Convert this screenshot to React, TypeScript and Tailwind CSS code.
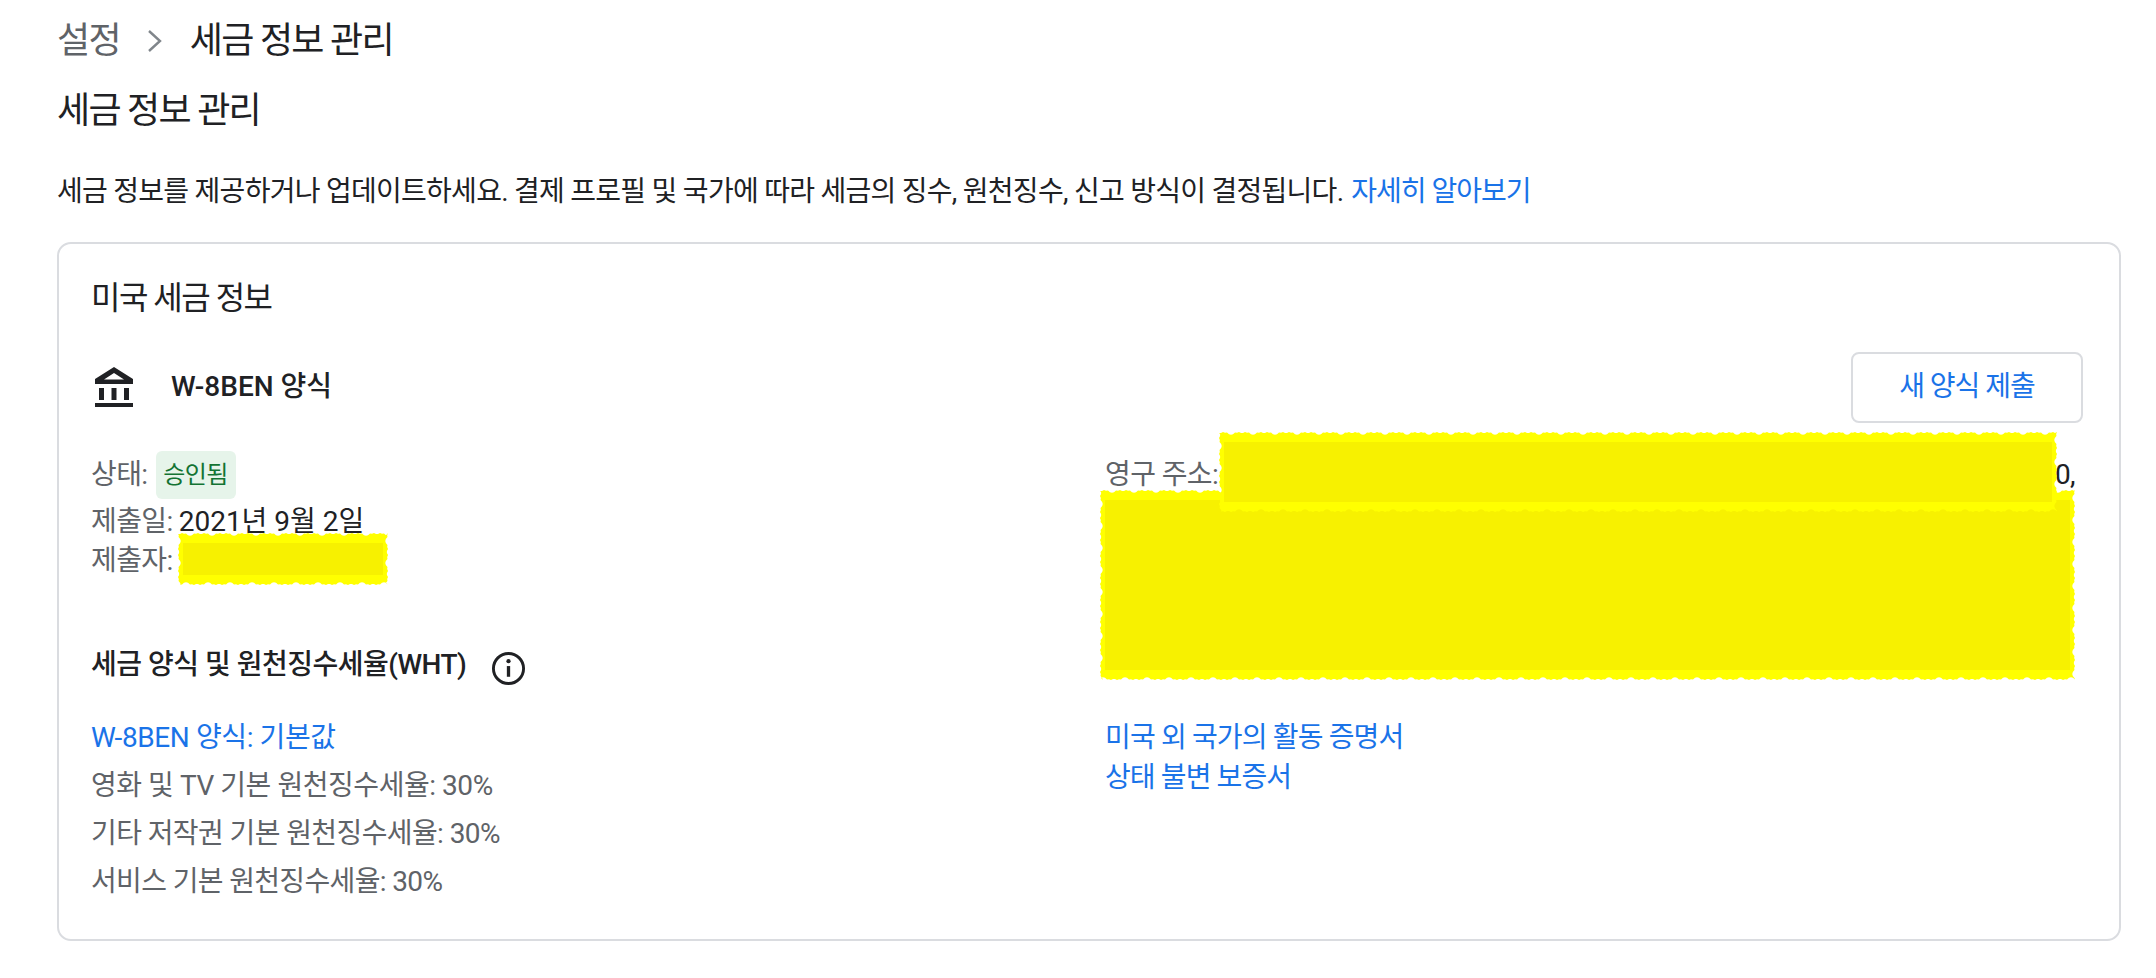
import React from 'react';

const font = { fontFamily: 'Roboto, "Noto Sans CJK KR", "Liberation Sans", sans-serif' };

function BankIcon() {
  return (
    <svg width="38" height="40" viewBox="0 0 38 40" fill="#202124">
      <path d="M19 0 L38 12 V17 H0 V12 Z M19 6 L9 12.5 H29 Z" fillRule="evenodd" />
      <rect x="4" y="21" width="5" height="12" />
      <rect x="16.5" y="21" width="5" height="12" />
      <rect x="29" y="21" width="5" height="12" />
      <rect x="0" y="36" width="38" height="4" />
    </svg>
  );
}

function InfoIcon() {
  return (
    <svg className="mt-[7px]" width="35" height="35" viewBox="0 0 36 36" fill="none">
      <circle cx="18" cy="18" r="15.5" stroke="#202124" strokeWidth="3" />
      <rect x="16.3" y="15.5" width="3.4" height="11" fill="#202124" />
      <circle cx="18" cy="10.5" r="2.2" fill="#202124" />
    </svg>
  );
}

// marker scribble over hidden values: rough edge, flat fill
function Redact({ className, w, h }: { className: string; w: number; h: number }) {
  const jitter = (i: number) => (((i * i * 31 + i * 17) % 11) / 11) * 3;
  const pts: string[] = [];
  for (let x = 0, i = 1; x < w; x += 2, i++) pts.push(`${x},${jitter(i)}`);
  for (let y = 0, i = 3; y < h; y += 2, i++) pts.push(`${w - jitter(i)},${y}`);
  for (let x = w, i = 5; x > 0; x -= 2, i++) pts.push(`${x},${h - jitter(i)}`);
  for (let y = h, i = 7; y > 0; y -= 2, i++) pts.push(`${jitter(i)},${y}`);
  return (
    <svg className={`absolute ${className}`} width={w} height={h} viewBox={`0 0 ${w} ${h}`}>
      <polygon points={pts.join(' ')} fill="#ffff00" />
      <rect x="5" y="10" width={w - 10} height={h - 20} fill="#f7f100" />
    </svg>
  );
}

export default function App() {
  return (
    <div style={font} className="w-[2156px] h-[978px] bg-white overflow-hidden px-[57px] text-[#202124]">
      <div className="pt-[3px] h-[79px] flex items-center text-[36px] tracking-[-1.7px]">
        <span className="text-[#5f6368]">설정</span>
        <svg className="mx-[24px]" width="22" height="32" viewBox="0 0 22 32" fill="none">
          <path d="M5 6 L16 16 L5 26" stroke="#80868b" strokeWidth="2.4" />
        </svg>
        <span>세금 정보 관리</span>
      </div>
      <h1 className="h-[68px] -mt-[2px] flex items-center text-[36px] font-normal tracking-[-1.7px]">세금 정보 관리</h1>
      <p className="mt-[21px] h-[52px] flex items-center text-[28px] tracking-[-0.73px]">
        세금 정보를 제공하거나 업데이트하세요. 결제 프로필 및 국가에 따라 세금의 징수, 원천징수, 신고 방식이 결정됩니다.
        <a className="ml-[8px] text-[#1a73e8] tracking-[-1px]">자세히 알아보기</a>
      </p>
      <section className="mt-[24px] h-[699px] w-[2064px] rounded-[14px] border-2 border-[#dadce0] px-[32px]">
        <h2 className="mt-[34px] h-[40px] flex items-center text-[32px] font-normal tracking-[-1.5px]">미국 세금 정보</h2>
        <div className="mt-[34px] h-[70px] flex items-center justify-between mr-[4px]">
          <div className="flex items-center gap-[38px] pl-[4px]">
            <BankIcon />
            <span className="text-[28px] font-medium tracking-[0px]">W-8BEN 양식</span>
          </div>
          <button className="w-[232px] h-[71px] rounded-[8px] border-2 border-[#dadce0] text-[28px] text-[#1a73e8] tracking-[-1px]">새 양식 제출</button>
        </div>
        <div className="grid grid-cols-[1014px_1fr] text-[28px] tracking-[-0.6px] text-[#5f6368]">
          <div>
            <div className="mt-[29px] h-[48px] flex items-center">
              상태:
              <span className="ml-[8px] h-[48px] w-[80px] flex items-center justify-center rounded-[6px] bg-[#e6f4ea] text-[24px] text-[#137333]">승인됨</span>
            </div>
            <div className="mt-[3px] h-[40px] flex items-center">
              제출일:<span className="ml-[6px] text-[#202124] tracking-[0px]">2021년 9월 2일</span>
            </div>
            <div className="-mt-[1px] h-[40px] flex items-center relative">
              제출자:
              <Redact className="left-[87px] -top-[8px]" w={210} h={52} />
            </div>
            <div className="mt-[60px] h-[48px] flex items-center text-[#202124] font-medium gap-[25px] tracking-[-0.5px]">
              세금 양식 및 원천징수세율(WHT)
              <InfoIcon />
            </div>
            <div className="mt-[25px] h-[48px] flex items-center text-[#1a73e8] tracking-[-0.4px]">W-8BEN 양식: 기본값</div>
            <div className="h-[48px] flex items-center tracking-[-0.45px]">영화 및 TV 기본 원천징수세율: 30%</div>
            <div className="h-[48px] flex items-center tracking-[-0.6px]">기타 저작권 기본 원천징수세율: 30%</div>
            <div className="h-[48px] flex items-center tracking-[-0.65px]">서비스 기본 원천징수세율: 30%</div>
          </div>
          <div>
            <div className="mt-[29px] h-[48px] flex items-center relative">
              영구 주소:
              <span className="ml-auto mr-[12px] text-[#202124]">0,</span>
              <Redact className="-left-[5px] top-[39px]" w={975} h={190} />
              <Redact className="left-[114px] -top-[19px]" w={838} h={80} />
            </div>
            <div className="mt-[219px] h-[40px] flex items-center text-[#1a73e8] tracking-[-0.85px]">미국 외 국가의 활동 증명서</div>
            <div className="h-[40px] flex items-center text-[#1a73e8] tracking-[-0.9px]">상태 불변 보증서</div>
          </div>
        </div>
      </section>
    </div>
  );
}
